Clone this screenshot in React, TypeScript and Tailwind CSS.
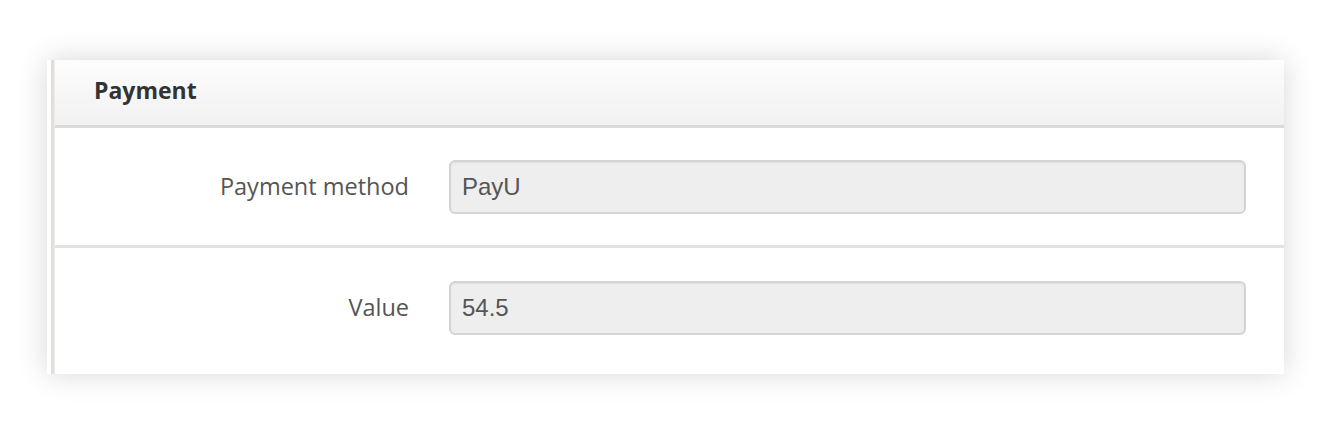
import React from "react";

function Row({ label, value, last }: { label: string; value: string; last?: boolean }) {
  return (
    <div className={`flex items-center ${last ? "pt-[33px] pb-[39px]" : "pt-[32px] pb-[31px] border-b-[3px] border-[#e2e2e2]"}`}>
      <div className="w-[394px] shrink-0 text-right pr-[40px] text-[23.5px] text-[#555] font-['Open_Sans',sans-serif] leading-none">
        {label}
      </div>
      <div className="flex-1 mr-[38px] h-[54px] rounded-[6px] border-2 border-[#d4d4d4] bg-[#eeeeee] shadow-[inset_0_1px_2px_rgba(0,0,0,0.06)] flex items-center pl-[11px] text-[24px] text-[#555] font-['Liberation_Sans',Arial,sans-serif]">
        {value}
      </div>
    </div>
  );
}

export default function App() {
  return (
    <div className="w-[1341px] h-[439px] bg-white pt-[60px] pl-[47px]">
      <div className="w-[1237px] bg-white shadow-[0_0_28px_rgba(0,0,0,0.16)] pl-[4px] flex">
        <div className="w-[4px] shrink-0 bg-[#e4ddd8] border-r border-[#efebe8]" />
        <div className="flex-1">
          <div className="h-[68px] bg-gradient-to-b from-[#fdfdfd] to-[#f1f1f1] flex items-center pl-[39px] pb-[4px] border-b-[3px] border-[#dadada] text-[23px] font-bold text-[#333] font-['Open_Sans',sans-serif]">
            Payment
          </div>
          <Row label="Payment method" value="PayU" />
          <Row label="Value" value="54.5" last />
        </div>
      </div>
    </div>
  );
}
